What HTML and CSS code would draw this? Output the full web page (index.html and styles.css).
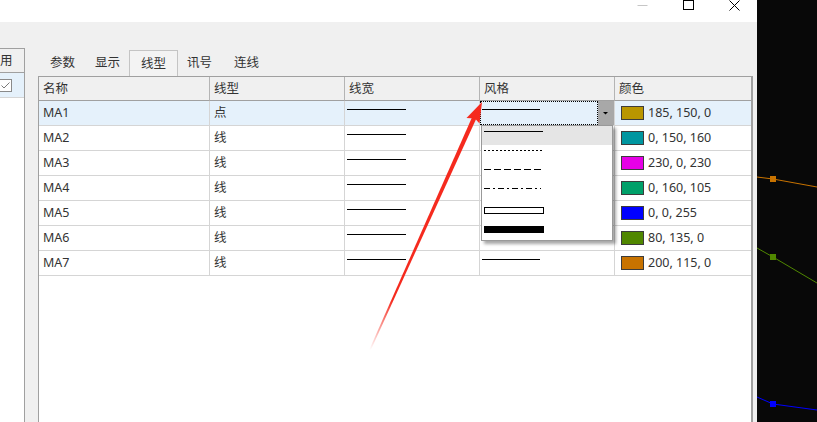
FILE: index.html
```html
<!DOCTYPE html>
<html lang="zh-CN">
<head>
<meta charset="utf-8">
<title>线型设置</title>
<link rel="stylesheet" href="styles.css">
</head>
<body>
<div class="screen">
  <div class="window">
    <div class="titlebar">
      <div class="tb-btn"><svg width="11" height="11" viewBox="0 0 11 11"><line x1="0.5" y1="5.5" x2="10.5" y2="5.5" stroke="#c6c6c6" stroke-width="1"/></svg></div>
      <div class="tb-btn"><svg width="11" height="11" viewBox="0 0 11 11"><rect x="0.5" y="0.5" width="10" height="9" fill="none" stroke="#000" stroke-width="1"/></svg></div>
      <div class="tb-btn"><svg width="11" height="11" viewBox="0 0 11 11"><path d="M0.5 0.5 L10.5 10.5 M10.5 0.5 L0.5 10.5" stroke="#000" stroke-width="1"/></svg></div>
    </div>
    <div class="content">
      <div class="side">
        <div class="side-head">用</div>
        <div class="side-row">
          <span class="chk"><svg width="11" height="11" viewBox="0 0 11 11"><path d="M1.5 5.5 L4 8 L9.5 2.5" fill="none" stroke="#7a7a7a" stroke-width="1"/></svg></span>
        </div>
      </div>
      <div class="main">
        <div class="tabs">
          <div class="tab">参数</div>
          <div class="tab">显示</div>
          <div class="tab active">线型</div>
          <div class="tab wide">讯号</div>
          <div class="tab">连线</div>
        </div>
        <div class="grid">
          <div class="th">名称</div><div class="th">线型</div><div class="th">线宽</div><div class="th">风格</div><div class="th last">颜色</div>

          <div class="td sel">MA1</div><div class="td sel">点</div><div class="td sel"><span class="ls"></span></div>
          <div class="td sel combo-cell"><div class="combo"><span class="ls ls-s"></span></div><div class="combo-btn"><svg width="16" height="24" viewBox="0 0 16 24"><polygon points="5,11 10,11 7.5,13.5" fill="#000"/></svg></div></div>
          <div class="td sel last"><span class="sw" style="background:rgb(185,150,0)"></span>185, 150, 0</div>

          <div class="td">MA2</div><div class="td">线</div><div class="td"><span class="ls"></span></div><div class="td"><span class="ls ls-s"></span></div>
          <div class="td last"><span class="sw" style="background:rgb(0,150,160)"></span>0, 150, 160</div>

          <div class="td">MA3</div><div class="td">线</div><div class="td"><span class="ls"></span></div><div class="td"><span class="ls ls-s"></span></div>
          <div class="td last"><span class="sw" style="background:rgb(230,0,230)"></span>230, 0, 230</div>

          <div class="td">MA4</div><div class="td">线</div><div class="td"><span class="ls"></span></div><div class="td"><span class="ls ls-s"></span></div>
          <div class="td last"><span class="sw" style="background:rgb(0,160,105)"></span>0, 160, 105</div>

          <div class="td">MA5</div><div class="td">线</div><div class="td"><span class="ls"></span></div><div class="td"><span class="ls ls-s"></span></div>
          <div class="td last"><span class="sw" style="background:rgb(0,0,255)"></span>0, 0, 255</div>

          <div class="td">MA6</div><div class="td">线</div><div class="td"><span class="ls"></span></div><div class="td"><span class="ls ls-s"></span></div>
          <div class="td last"><span class="sw" style="background:rgb(80,135,0)"></span>80, 135, 0</div>

          <div class="td">MA7</div><div class="td">线</div><div class="td"><span class="ls"></span></div><div class="td"><span class="ls ls-s"></span></div>
          <div class="td last"><span class="sw" style="background:rgb(200,115,0)"></span>200, 115, 0</div>

          <div class="dropdown">
            <div class="dd-item hl"><svg width="60" height="8" viewBox="0 0 60 8"><line x1="0" y1="0.5" x2="59" y2="0.5" stroke="#000"/></svg></div>
            <div class="dd-item"><svg width="60" height="8" viewBox="0 0 60 8"><line x1="0" y1="0.5" x2="60" y2="0.5" stroke="#000" stroke-dasharray="2 2"/></svg></div>
            <div class="dd-item"><svg width="60" height="8" viewBox="0 0 60 8"><line x1="0" y1="0.5" x2="60" y2="0.5" stroke="#000" stroke-dasharray="7 3"/></svg></div>
            <div class="dd-item"><svg width="60" height="8" viewBox="0 0 60 8"><line x1="0" y1="0.5" x2="57" y2="0.5" stroke="#000" stroke-dasharray="6 3 2 3"/></svg></div>
            <div class="dd-item"><svg width="60" height="8" viewBox="0 0 60 8"><rect x="0.5" y="0.5" width="59" height="6" fill="#fff" stroke="#000"/></svg></div>
            <div class="dd-item"><svg width="60" height="8" viewBox="0 0 60 8"><rect x="0" y="0" width="60" height="7" fill="#000"/></svg></div>
          </div>
        </div>
      </div>
    </div>
  </div>
  <div class="canvas">
    <svg width="60" height="422" viewBox="0 0 60 422">
      <polyline points="0,177 16,179 60,187" fill="none" stroke="rgb(200,115,0)" stroke-width="1"/>
      <rect x="13" y="176" width="6" height="6" fill="rgb(200,115,0)"/>
      <polyline points="0,248 16,257 60,283" fill="none" stroke="rgb(80,135,0)" stroke-width="1"/>
      <rect x="13" y="254" width="6" height="6" fill="rgb(80,135,0)"/>
      <polyline points="0,397 16,404 60,410" fill="none" stroke="rgb(0,0,255)" stroke-width="1"/>
      <rect x="13" y="401" width="6" height="6" fill="rgb(0,0,255)"/>
    </svg>
  </div>
  <svg class="arrow" width="817" height="422" viewBox="0 0 817 422">
    <defs>
      <linearGradient id="fade" gradientUnits="userSpaceOnUse" x1="370" y1="350" x2="392" y2="300">
        <stop offset="0" stop-color="#f52a1e" stop-opacity="0"/>
        <stop offset="1" stop-color="#f52a1e" stop-opacity="1"/>
      </linearGradient>
    </defs>
    <polygon points="370.7,350.3 369.3,349.7 472.6,116.1 476.6,117.9" fill="url(#fade)"/>
    <polygon points="482,102 479.5,123.5 475,118.5 466.5,118" fill="#f52a1e"/>
  </svg>
</div>
</body>
</html>
```

FILE: styles.css
```css
html, body {
  margin: 0;
  padding: 0;
}

body {
  font-family: "Noto Sans", "Noto Sans CJK SC", sans-serif;
  font-size: 12.5px;
  color: #333;
}

.screen {
  position: relative;
  display: flex;
  width: 817px;
  height: 422px;
  overflow: hidden;
}

.window {
  width: 757px;
  display: flex;
  flex-direction: column;
  background: #f0f0f0;
}

.titlebar {
  height: 22px;
  flex: none;
  background: #fff;
  display: flex;
  justify-content: flex-end;
}

.tb-btn {
  width: 46px;
  display: flex;
  justify-content: center;
  align-items: flex-start;
}

.tb-btn svg {
  display: block;
}

.content {
  flex: 1;
  display: flex;
  min-height: 0;
}

.side {
  width: 24px;
  margin-top: 26px;
  border-top: 1px solid #a0a0a0;
  border-right: 1px solid #a0a0a0;
  background: #fff;
  display: flex;
  flex-direction: column;
  overflow: hidden;
}

.side-head {
  height: 23px;
  line-height: 23px;
  background: #f0f0f0;
  border-bottom: 1px solid #a0a0a0;
  white-space: nowrap;
}

.side-row {
  height: 24px;
  background: #e5f1fb;
  border-bottom: 1px solid #d5d5d5;
}

.chk {
  display: block;
  width: 11px;
  height: 11px;
  margin-top: 6px;
  margin-left: -1px;
  border: 1px solid #8a8a8a;
  background: #fff;
}

.chk svg {
  display: block;
}

.main {
  flex: 1;
  display: flex;
  flex-direction: column;
  padding: 28px 4px 0 13px;
  min-width: 0;
}

.tabs {
  display: flex;
  height: 26px;
  flex: none;
  padding-left: 2px;
}

.tab {
  padding: 0 10px;
  line-height: 25px;
  white-space: nowrap;
}

.tab.active {
  margin: 0 -1px;
  padding: 0 11px;
  border: 1px solid #c4c4c4;
  border-bottom: none;
  background: #f3f3f3;
  position: relative;
  z-index: 1;
}

.tab.wide {
  padding-right: 12px;
}

.grid {
  flex: 1;
  position: relative;
  background: #fff;
  border: 1px solid #a0a0a0;
  border-right-width: 2px;
  border-bottom: none;
  display: grid;
  grid-template-columns: 171px 135px 135px 135px 1fr;
  grid-auto-rows: min-content;
  align-content: start;
}

.th {
  height: 24px;
  box-sizing: border-box;
  padding-left: 4px;
  line-height: 23px;
  background: #f0f0f0;
  border-right: 1px solid #b4b4b4;
  border-bottom: 1px solid #a0a0a0;
  white-space: nowrap;
}

.td {
  height: 25px;
  box-sizing: border-box;
  padding-left: 4px;
  line-height: 24px;
  border-right: 1px solid #d5d5d5;
  border-bottom: 1px solid #d5d5d5;
  white-space: nowrap;
  display: flex;
  align-items: center;
}

.th.last,
.td.last {
  border-right: none;
}

.td.sel {
  background: #e5f1fb;
}

.ls {
  align-self: flex-start;
  display: block;
  width: 59px;
  height: 1px;
  margin-top: 8px;
  margin-left: -2px;
  background: #000;
}

.ls.ls-s {
  width: 58px;
}

.combo-cell {
  padding-left: 0;
  align-items: stretch;
}

.combo {
  flex: 1;
  border: 1px dotted #000;
  display: flex;
}

.combo .ls {
  margin-top: 7px;
  margin-left: 1px;
}

.combo-btn {
  width: 16px;
  background: #a8a8a8;
}

.combo-btn svg {
  display: block;
}

.sw {
  display: block;
  width: 23px;
  height: 14px;
  box-sizing: border-box;
  border: 1px solid #3c3c3c;
  margin-left: 2px;
  margin-right: 4px;
  flex: none;
}

.dropdown {
  position: absolute;
  left: 442px;
  top: 48px;
  width: 132px;
  box-sizing: border-box;
  border: 1px solid #999;
  background: #fff;
  box-shadow: 3px 3px 3px rgba(0, 0, 0, 0.35);
  z-index: 2;
}

.dd-item {
  height: 19px;
  box-sizing: border-box;
  padding: 5px 0 0 2px;
}

.dd-item svg {
  display: block;
}

.dd-item.hl {
  background: #e5e5e5;
}

.canvas {
  flex: 1;
  background: #080808;
}

.canvas svg {
  display: block;
}

.arrow {
  position: absolute;
  left: 0;
  top: 0;
  pointer-events: none;
  z-index: 5;
}
```
